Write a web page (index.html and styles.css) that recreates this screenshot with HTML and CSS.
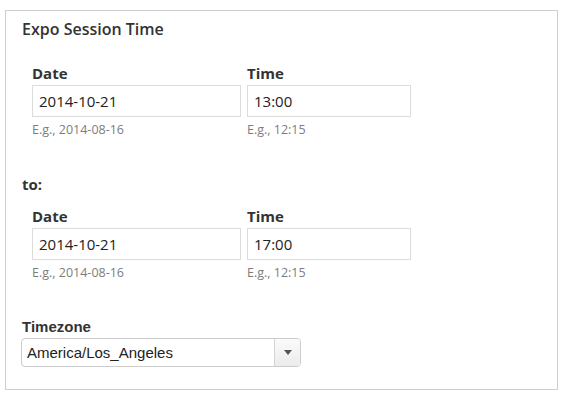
FILE: index.html
```html
<!DOCTYPE html>
<html>
<head>
<meta charset="utf-8">
<link rel="stylesheet" href="styles.css">
</head>
<body>
<div class="box">
  <div class="heading">Expo Session Time</div>
  <div class="group first">
    <div class="field date">
      <div class="label">Date</div>
      <div class="input">2014-10-21</div>
      <div class="help">E.g., 2014-08-16</div>
    </div>
    <div class="field time">
      <div class="label">Time</div>
      <div class="input">13:00</div>
      <div class="help">E.g., 12:15</div>
    </div>
  </div>
  <div class="to">to:</div>
  <div class="group second">
    <div class="field date">
      <div class="label">Date</div>
      <div class="input">2014-10-21</div>
      <div class="help">E.g., 2014-08-16</div>
    </div>
    <div class="field time">
      <div class="label">Time</div>
      <div class="input">17:00</div>
      <div class="help">E.g., 12:15</div>
    </div>
  </div>
  <div class="tz-label">Timezone</div>
  <div class="select">
    <span class="select-text">America/Los_Angeles</span>
    <span class="select-arrow"><span class="tri"></span></span>
  </div>
</div>
</body>
</html>
```

FILE: styles.css
```css
* { box-sizing: border-box; }
html, body { margin: 0; padding: 0; background: #fff; }
body {
  font-family: "Open Sans", "Liberation Sans", sans-serif;
  color: #333;
}
.box {
  margin: 10px 0 0 5px;
  width: 553px;
  height: 380px;
  border: 1px solid #cfcfcf;
  padding: 8px 16px 0 16px;
}
.heading {
  font-size: 16px;
  font-weight: 600;
  line-height: 20px;
  color: #333;
}
.group {
  display: flex;
  gap: 6px;
  padding-left: 10px;
}
.group.first { margin-top: 24px; }
.group.second { margin-top: 12px; }
.field .label {
  font-size: 15px;
  font-weight: 700;
  line-height: 20px;
  color: #333;
}
.field .input {
  margin-top: 2px;
  height: 32px;
  border: 1px solid #dcdcdc;
  padding: 5px 6px;
  font-size: 15px;
  line-height: 20px;
  color: #222;
}
.field.date .input { width: 209px; }
.field.time .input { width: 164px; }
.field .help {
  margin-top: 5px;
  font-size: 12.5px;
  line-height: 16px;
  color: #7d7d7d;
}
.to {
  margin-top: 36px;
  font-size: 15px;
  font-weight: 700;
  line-height: 20px;
  color: #333;
}
.tz-label {
  margin-top: 36px;
  font-family: "Liberation Sans", Arial, sans-serif;
  font-size: 15px;
  font-weight: 700;
  line-height: 20px;
  color: #333;
}
.select {
  margin: 1px 0 0 -1px;
  width: 280px;
  height: 29px;
  border: 1px solid #cccccc;
  border-radius: 4px;
  display: flex;
  align-items: stretch;
  font-family: "Liberation Sans", Arial, sans-serif;
  font-size: 15px;
  color: #222;
  background: #fff;
  overflow: hidden;
}
.select-text {
  flex: 1;
  padding-left: 5px;
  line-height: 27px;
}
.select-arrow {
  width: 26px;
  border-left: 1px solid #d4d4d4;
  background: linear-gradient(#fafafa, #ececec);
  display: flex;
  align-items: center;
  justify-content: center;
}
.tri {
  width: 0;
  height: 0;
  border-left: 4px solid transparent;
  border-right: 4px solid transparent;
  border-top: 5px solid #555;
  margin-left: 1px;
}
```
